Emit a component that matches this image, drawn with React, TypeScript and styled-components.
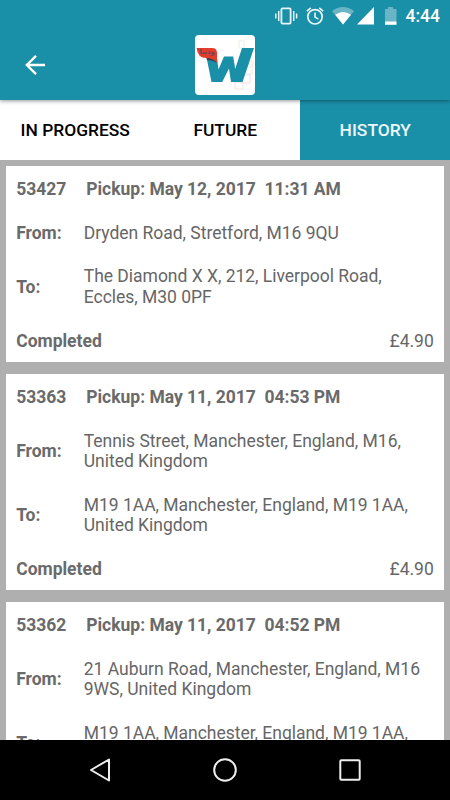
import React from "react";
import styled, { createGlobalStyle } from "styled-components";

const TEAL = "#1a8fa8";

const GlobalStyle = createGlobalStyle`
  * { box-sizing: border-box; }
  body {
    margin: 0;
    font-family: Roboto, "Noto Sans", sans-serif;
    font-size: 17.5px;
    line-height: 20.4px;
  }
`;

const Screen = styled.div`
  display: flex;
  flex-direction: column;
  width: 450px;
  height: 800px;
  overflow: hidden;
  background: #afafaf;
`;

const Header = styled.header`
  flex: none;
  height: 100px;
  background: ${TEAL};
  box-shadow: 0 1px 4px rgba(0, 0, 0, 0.42);
  z-index: 1;
`;

const StatusBar = styled.div`
  display: flex;
  align-items: center;
  justify-content: flex-end;
  height: 30px;
  padding: 1px 9.5px 0 0;
  color: #fff;
`;

const StatusIcons = styled.svg`
  display: block;
  width: 130px;
  height: 30px;
`;

const Clock = styled.span`
  width: 35px;
  margin-left: 5.5px;
  padding-top: 1px;
  font-weight: 500;
  white-space: nowrap;
`;

const Toolbar = styled.div`
  display: grid;
  grid-template-columns: 1fr 60px 1fr;
  align-items: center;
  height: 70px;
`;

const BackButton = styled.button`
  width: 70px;
  height: 70px;
  padding: 0;
  border: 0;
  background: none;

  svg { display: block; }
`;

const Logo = styled.svg`
  display: block;
  width: 60px;
  height: 60px;
`;

const LogoText = styled.text`
  fill: #5d4b5c;
  font: 700 7px "DejaVu Sans", sans-serif;
`;

const Tabs = styled.nav`
  display: grid;
  flex: none;
  grid-template-columns: repeat(3, 1fr);
  height: 60px;
`;

const Tab = styled.button<{ $active?: boolean }>`
  padding: 0 0 1px 0.5px;
  border: 0;
  background: ${(p) => (p.$active ? TEAL : "#fff")};
  color: ${(p) => (p.$active ? "#eef7fa" : "#000")};
  font: 500 17.4px/20px Roboto, sans-serif;
`;

const TripList = styled.main`
  display: flex;
  flex: 1;
  flex-direction: column;
  gap: 12.5px;
  min-height: 0;
  padding: 6px 6.25px 0;
  overflow: hidden;
`;

const Card = styled.article`
  flex: none;
  padding: 1.1px 10px 0;
  background: #fff;
  color: #6a6a6a;
  letter-spacing: -0.02px;
`;

const Row = styled.div`
  display: flex;
  align-items: center;
  padding: 11.7px 0;
`;

const SummaryRow = styled(Row)`
  justify-content: space-between;
  padding-bottom: 10.6px;
`;

const Strong = styled.span<{ $width?: number }>`
  flex: none;
  width: ${(p) => (p.$width ? `${p.$width}px` : "auto")};
  font-weight: 700;
  white-space: pre;
`;

const Address = styled.span`
  color: #666;
  white-space: pre;
`;

const NavBar = styled.footer`
  display: flex;
  flex: none;
  align-items: center;
  justify-content: center;
  gap: 101px;
  height: 60px;
  background: #000;

  svg { display: block; }
`;

interface Trip {
  id: string;
  pickup: string;
  from: string;
  to: string;
  price?: string;
}

const trips: Trip[] = [
  {
    id: "53427",
    pickup: "May 12, 2017  11:31 AM",
    from: "Dryden Road, Stretford, M16 9QU",
    to: "The Diamond X X, 212, Liverpool Road,\nEccles, M30 0PF",
    price: "£4.90",
  },
  {
    id: "53363",
    pickup: "May 11, 2017  04:53 PM",
    from: "Tennis Street, Manchester, England, M16,\nUnited Kingdom",
    to: "M19 1AA, Manchester, England, M19 1AA,\nUnited Kingdom",
    price: "£4.90",
  },
  {
    id: "53362",
    pickup: "May 11, 2017  04:52 PM",
    from: "21 Auburn Road, Manchester, England, M16\n9WS, United Kingdom",
    to: "M19 1AA, Manchester, England, M19 1AA,\nUnited Kingdom",
  },
];

const TripCard = ({ trip }: { trip: Trip }) => (
  <Card>
    <Row>
      <Strong $width={70}>{trip.id}</Strong>
      <Strong>Pickup: {trip.pickup}</Strong>
    </Row>
    <Row>
      <Strong $width={67.5}>From:</Strong>
      <Address>{trip.from}</Address>
    </Row>
    <Row>
      <Strong $width={67.5}>To:</Strong>
      <Address>{trip.to}</Address>
    </Row>
    {trip.price && (
      <SummaryRow>
        <Strong>Completed</Strong>
        <Address>{trip.price}</Address>
      </SummaryRow>
    )}
  </Card>
);

export default function App() {
  return (
    <>
      <GlobalStyle />
      <Screen>
        <Header>
          <StatusBar>
            <StatusIcons viewBox="270 0 130 30" fill="none">
              <g stroke="#eaf5f8" strokeWidth="1.8">
                <rect x="281.4" y="7.4" width="9.2" height="15.2" rx="1" />
                <path d="M278.7 10v10M275.8 12.5v5M293.7 10v10M296.6 12.5v5" strokeWidth="1.5" />
              </g>
              <g stroke="#eaf5f8" strokeWidth="1.7">
                <circle cx="315" cy="15.8" r="7.2" />
                <path d="M315 11.5v4.6l3.4 2M306.8 10.2l4-3.4M323.2 10.2l-4-3.4" strokeWidth="1.6" />
              </g>
              <path d="M332 10.2Q343 2 354 10.2L343 23.5Z" fill="#69b5c5" />
              <path d="M335.2 13.8Q343 8 351 13.8L343 23.5Z" fill="#fff" />
              <path d="M357 23.5L374 6V23.5Z" fill="#fff" />
              <path d="M385 8h3V6h5v2h3.5v13H385Z" fill="#69b5c5" />
              <path d="M385 20.5h11.5v3.3H385Z" fill="#fff" />
            </StatusIcons>
            <Clock>4:44</Clock>
          </StatusBar>
          <Toolbar>
            <BackButton aria-label="Back">
              <svg width="70" height="70" viewBox="0 0 70 70" fill="none" stroke="#fff" strokeWidth="2.4">
                <path d="M45 35H27M36 25.8L26.8 35L36 44.2" />
              </svg>
            </BackButton>
            <Logo viewBox="0 0 60 60">
              <rect width="60" height="60" rx="4" fill="#fff" />
              <g fill="none" strokeWidth="1.1" opacity="0.25">
                <path d="M40 47h8v7h-8zM46 40h9v8h-9z" stroke="#d88a9d" />
                <path d="M49 30h8v9h-8z" stroke="#9cba90" />
                <path d="M53 26h5v6h-5zM44 6h5v7h-5z" stroke="#b8cfa0" />
              </g>
              <path
                d="M11.5 22.5L16.5 47H27.2L34 33.5L36 47H47.5L59 13H47L40.2 34L38.2 21.5H29L23.5 34.5L22 23Z"
                fill={TEAL}
              />
              <path d="M11.5 23H17.5L22 27.5Q16 24.5 12 25Z" fill="#34434d" />
              <path d="M1.6 13H17Q22 13 22 18V27.5Q18 23 11.5 23Q2.5 23 1.6 13Z" fill="#e33b2c" />
              <LogoText x="12" y="19" textAnchor="middle" textLength="15" lengthAdjust="spacingAndGlyphs">
                ودينا
              </LogoText>
            </Logo>
          </Toolbar>
        </Header>
        <Tabs>
          <Tab>IN PROGRESS</Tab>
          <Tab>FUTURE</Tab>
          <Tab $active>HISTORY</Tab>
        </Tabs>
        <TripList>
          {trips.map((trip) => (
            <TripCard key={trip.id} trip={trip} />
          ))}
        </TripList>
        <NavBar>
          <svg width="24" height="24" viewBox="0 0 24 24" fill="none" stroke="#eee" strokeWidth="2" strokeLinejoin="round">
            <path d="M21 1.5V22.5L3 12Z" />
          </svg>
          <svg width="24" height="24" viewBox="0 0 24 24" fill="none" stroke="#eee" strokeWidth="2">
            <circle cx="12" cy="12" r="10.8" />
          </svg>
          <svg width="24" height="24" viewBox="0 0 24 24" fill="none" stroke="#eee" strokeWidth="2">
            <rect x="2.3" y="2.3" width="19.4" height="19.4" rx="1" />
          </svg>
        </NavBar>
      </Screen>
    </>
  );
}
